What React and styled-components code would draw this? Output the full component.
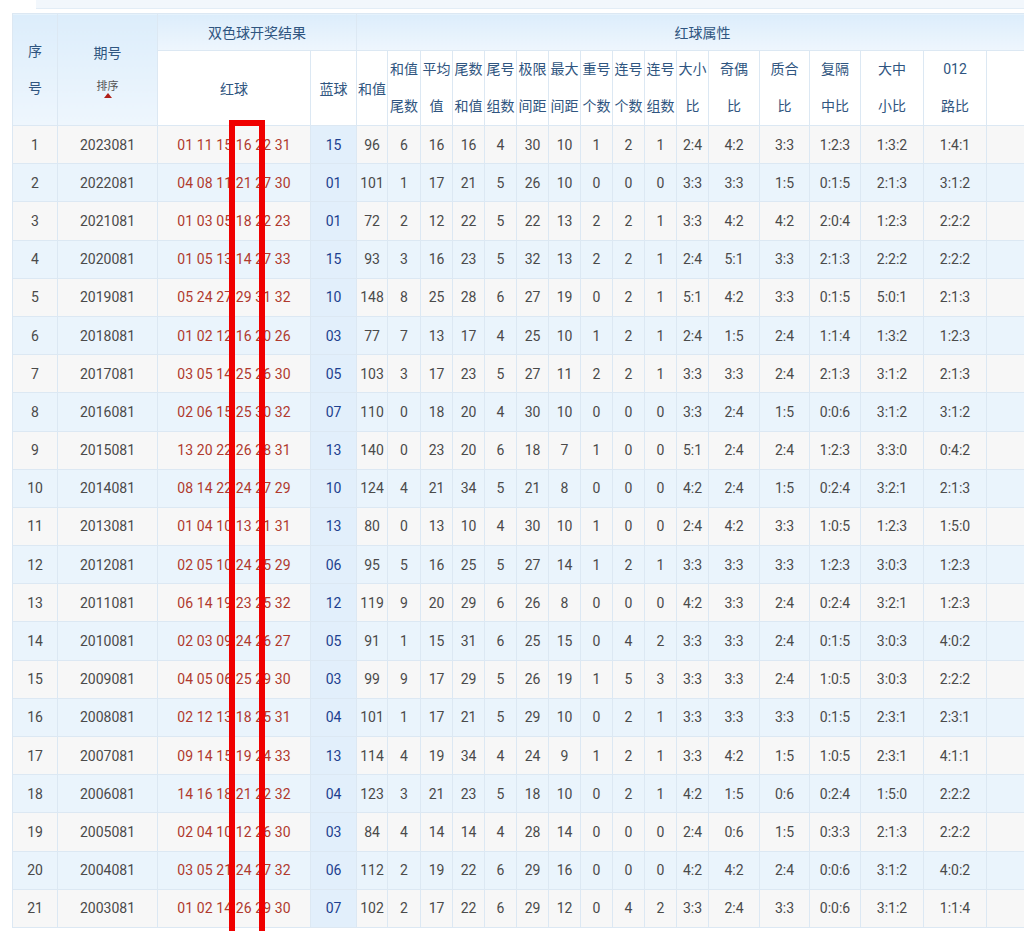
import React from "react";
import styled, { createGlobalStyle } from "styled-components";

const Global = createGlobalStyle`
  html,body{margin:0;padding:0;background:#fff;overflow:hidden;}
  body{font-family:Roboto,"Noto Sans CJK SC",sans-serif;}
`;
const Page = styled.div`width:1024px;height:931px;overflow:hidden;position:relative;background:#fff;`;
const TopBar = styled.div`height:8px;margin:0 0 4px 36px;background:#f2f7fc;border-bottom:1px solid #e3edf6;`;
const Wrap = styled.div`padding-left:12px;`;
const Table = styled.table`
  border-collapse:collapse;table-layout:fixed;width:1076px;font-size:14px;color:#4a4a4a;
  td,th{border:1px solid #dce8f3;text-align:center;padding:0;white-space:nowrap;overflow:hidden;}
`;
const H = styled.th`
  font-weight:normal;color:#2f5580;background:${p=>p.$bg||"#fff"};height:${p=>p.$h||36}px;line-height:${p=>p.$lh||"normal"};
  font-size:${p=>p.$fs||14}px;
`;
const Row = styled.tr`background:${p=>p.$alt?"#eaf4fc":"#f7f7f7"};td{height:37.2px;}`;
const Red = styled.td`color:#b03a2e;letter-spacing:0.1px;`;
const Blue = styled.td`color:#1d3f8f;background:#e2effb;`;
const Sort = styled.div`font-size:11px;color:#555;margin-top:20px;line-height:10px;`;
const Arrow = styled.div`width:0;height:0;margin:1px auto 0;border-left:4px solid transparent;border-right:4px solid transparent;border-bottom:5px solid #b0201a;`;
const Box = styled.div`position:absolute;left:229px;top:120px;width:36px;height:820px;border:6px solid #f00000;box-sizing:border-box;`;

const widths=[45,100,153,46,31,33,32,32,32,32,32,32,32,32,32,51,50,51,63,63,62,40];
const rows=[
["2023081","01 11 15 16 22 31","15",96,6,16,16,4,30,10,1,2,1,"2:4","4:2","3:3","1:2:3","1:3:2","1:4:1"],
["2022081","04 08 11 21 27 30","01",101,1,17,21,5,26,10,0,0,0,"3:3","3:3","1:5","0:1:5","2:1:3","3:1:2"],
["2021081","01 03 05 18 22 23","01",72,2,12,22,5,22,13,2,2,1,"3:3","4:2","4:2","2:0:4","1:2:3","2:2:2"],
["2020081","01 05 13 14 27 33","15",93,3,16,23,5,32,13,2,2,1,"2:4","5:1","3:3","2:1:3","2:2:2","2:2:2"],
["2019081","05 24 27 29 31 32","10",148,8,25,28,6,27,19,0,2,1,"5:1","4:2","3:3","0:1:5","5:0:1","2:1:3"],
["2018081","01 02 12 16 20 26","03",77,7,13,17,4,25,10,1,2,1,"2:4","1:5","2:4","1:1:4","1:3:2","1:2:3"],
["2017081","03 05 14 25 26 30","05",103,3,17,23,5,27,11,2,2,1,"3:3","3:3","2:4","2:1:3","3:1:2","2:1:3"],
["2016081","02 06 15 25 30 32","07",110,0,18,20,4,30,10,0,0,0,"3:3","2:4","1:5","0:0:6","3:1:2","3:1:2"],
["2015081","13 20 22 26 28 31","13",140,0,23,20,6,18,7,1,0,0,"5:1","2:4","2:4","1:2:3","3:3:0","0:4:2"],
["2014081","08 14 22 24 27 29","10",124,4,21,34,5,21,8,0,0,0,"4:2","2:4","1:5","0:2:4","3:2:1","2:1:3"],
["2013081","01 04 10 13 21 31","13",80,0,13,10,4,30,10,1,0,0,"2:4","4:2","3:3","1:0:5","1:2:3","1:5:0"],
["2012081","02 05 10 24 25 29","06",95,5,16,25,5,27,14,1,2,1,"3:3","3:3","3:3","1:2:3","3:0:3","1:2:3"],
["2011081","06 14 19 23 25 32","12",119,9,20,29,6,26,8,0,0,0,"4:2","3:3","2:4","0:2:4","3:2:1","1:2:3"],
["2010081","02 03 09 24 26 27","05",91,1,15,31,6,25,15,0,4,2,"3:3","3:3","2:4","0:1:5","3:0:3","4:0:2"],
["2009081","04 05 06 25 29 30","03",99,9,17,29,5,26,19,1,5,3,"3:3","3:3","2:4","1:0:5","3:0:3","2:2:2"],
["2008081","02 12 13 18 25 31","04",101,1,17,21,5,29,10,0,2,1,"3:3","3:3","3:3","0:1:5","2:3:1","2:3:1"],
["2007081","09 14 15 19 24 33","13",114,4,19,34,4,24,9,1,2,1,"3:3","4:2","1:5","1:0:5","2:3:1","4:1:1"],
["2006081","14 16 18 21 22 32","04",123,3,21,23,5,18,10,0,2,1,"4:2","1:5","0:6","0:2:4","1:5:0","2:2:2"],
["2005081","02 04 10 12 26 30","03",84,4,14,14,4,28,14,0,0,0,"2:4","0:6","1:5","0:3:3","2:1:3","2:2:2"],
["2004081","03 05 21 24 27 32","06",112,2,19,22,6,29,16,0,0,0,"4:2","4:2","2:4","0:0:6","3:1:2","4:0:2"],
["2003081","01 02 14 26 29 30","07",102,2,17,22,6,29,12,0,4,2,"3:3","2:4","3:3","0:0:6","3:1:2","1:1:4"],
];
const sub=[["和值","尾数"],["平均","值"],["尾数","和值"],["尾号","组数"],["极限","间距"],["最大","间距"],["重号","个数"],["连号","个数"],["连号","组数"],["大小","比"],["奇偶","比"],["质合","比"],["复隔","中比"],["大中","小比"],["012","路比"]];
const grad="linear-gradient(#dcedfb,#eef6fd)";

export default function App(){
  return <Page><Global/><TopBar/><Wrap>
    <Table>
      <colgroup>{widths.map((w,i)=><col key={i} style={{width:w}}/>)}</colgroup>
      <thead>
        <tr>
          <H rowSpan={2} $bg={grad} $lh="37px">序<br/>号</H>
          <H rowSpan={2} $bg={grad}>期号<Sort>排序</Sort><Arrow/></H>
          <H colSpan={2} $bg={grad}>双色球开奖结果</H>
          <H colSpan={17} $bg={grad}>红球属性</H>
          <H $bg={grad}></H>
        </tr>
        <tr>
          <H $h={74}>红球</H>
          <H $h={74}>蓝球</H>
          <H $h={74}>和值</H>
          {sub.map((s,i)=><H key={i} $h={74} $lh="37px">{s[0]}<br/>{s[1]}</H>)}
          <H $h={74}></H>
        </tr>
      </thead>
      <tbody>
        {rows.map((r,i)=><Row key={i} $alt={i%2===1}>
          <td>{i+1}</td><td>{r[0]}</td><Red>{r[1]}</Red><Blue>{r[2]}</Blue>
          {r.slice(3).map((v,j)=><td key={j}>{v}</td>)}<td></td>
        </Row>)}
      </tbody>
    </Table>
  </Wrap><Box/></Page>;
}
